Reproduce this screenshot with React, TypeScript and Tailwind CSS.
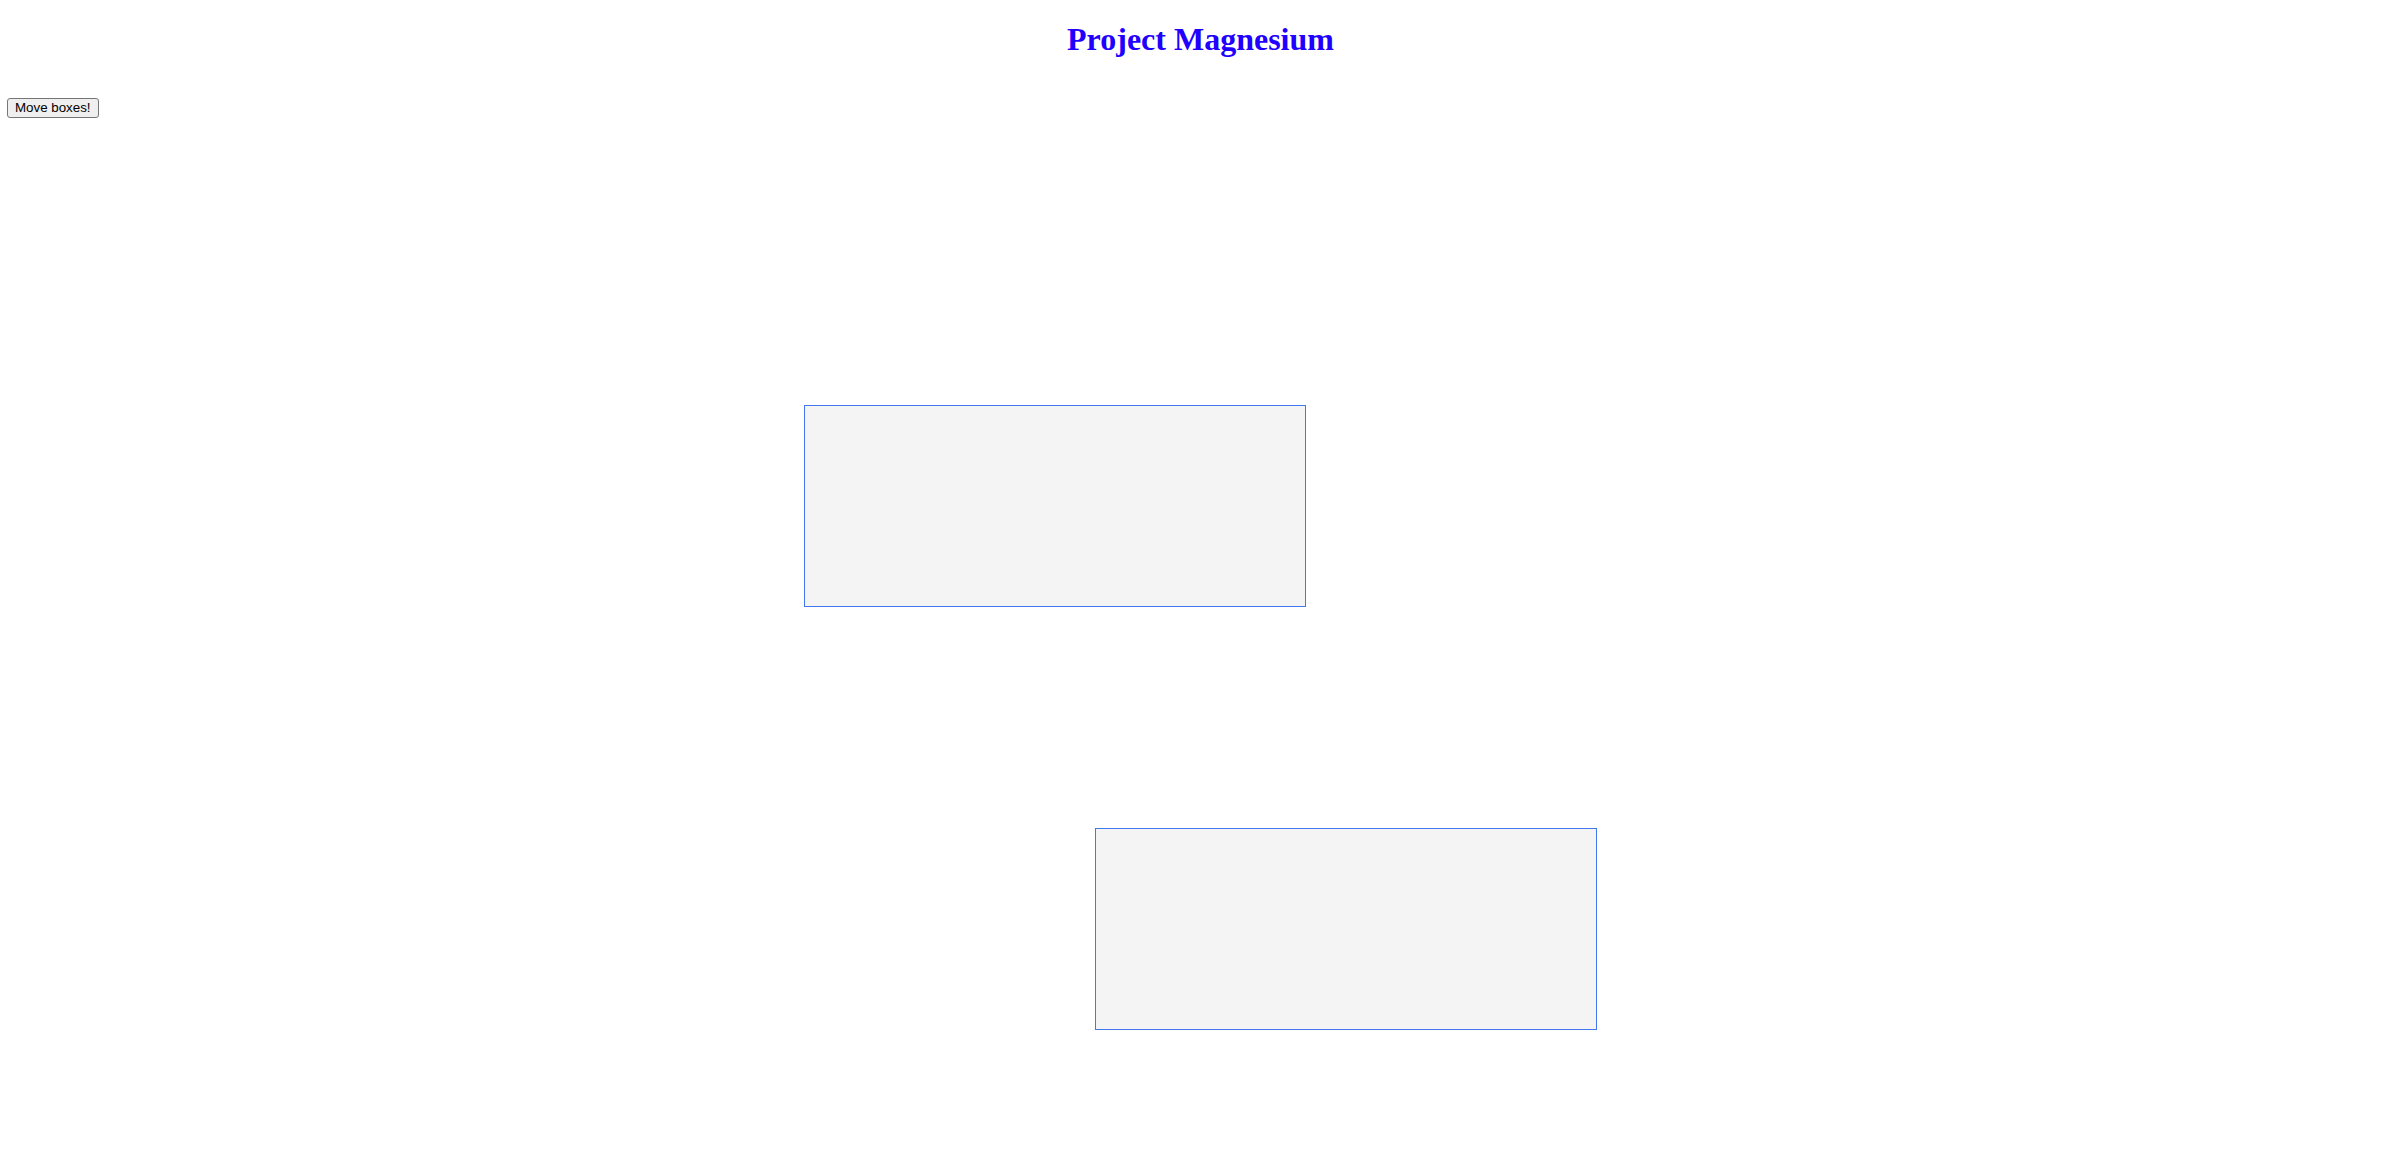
import React from 'react';

const boxes = [
    { id: 1, pos: 'left-[804px] top-[405px]' },
    { id: 2, pos: 'left-[1095px] top-[828px]' },
];

const App: React.FC = () => {
    return (
        <div className="relative min-h-[1157px] w-full bg-white overflow-hidden">
            {/* Header */}
            <h1 className="text-center text-[32px] leading-[37px] font-bold text-[#1f00ff] mt-[21px] mb-0 font-['Liberation_Serif',serif]">
                Project Magnesium
            </h1>

            {/* Controls */}
            <div className="pl-[7px] pt-[36px]">
                <button className="h-[20px] px-[7px] text-[13.33px] leading-none text-black bg-[#efefef] border border-[#767676] rounded-[3px] font-['Liberation_Sans',sans-serif]">
                    Move boxes!
                </button>
            </div>

            {/* Boxes live on a free canvas */}
            {boxes.map((b) => (
                <div
                    key={b.id}
                    className={`absolute ${b.pos} w-[502px] h-[202px] bg-[#f4f4f4] border border-[#4277ef]`}
                />
            ))}
        </div>
    );
};

export default App;
